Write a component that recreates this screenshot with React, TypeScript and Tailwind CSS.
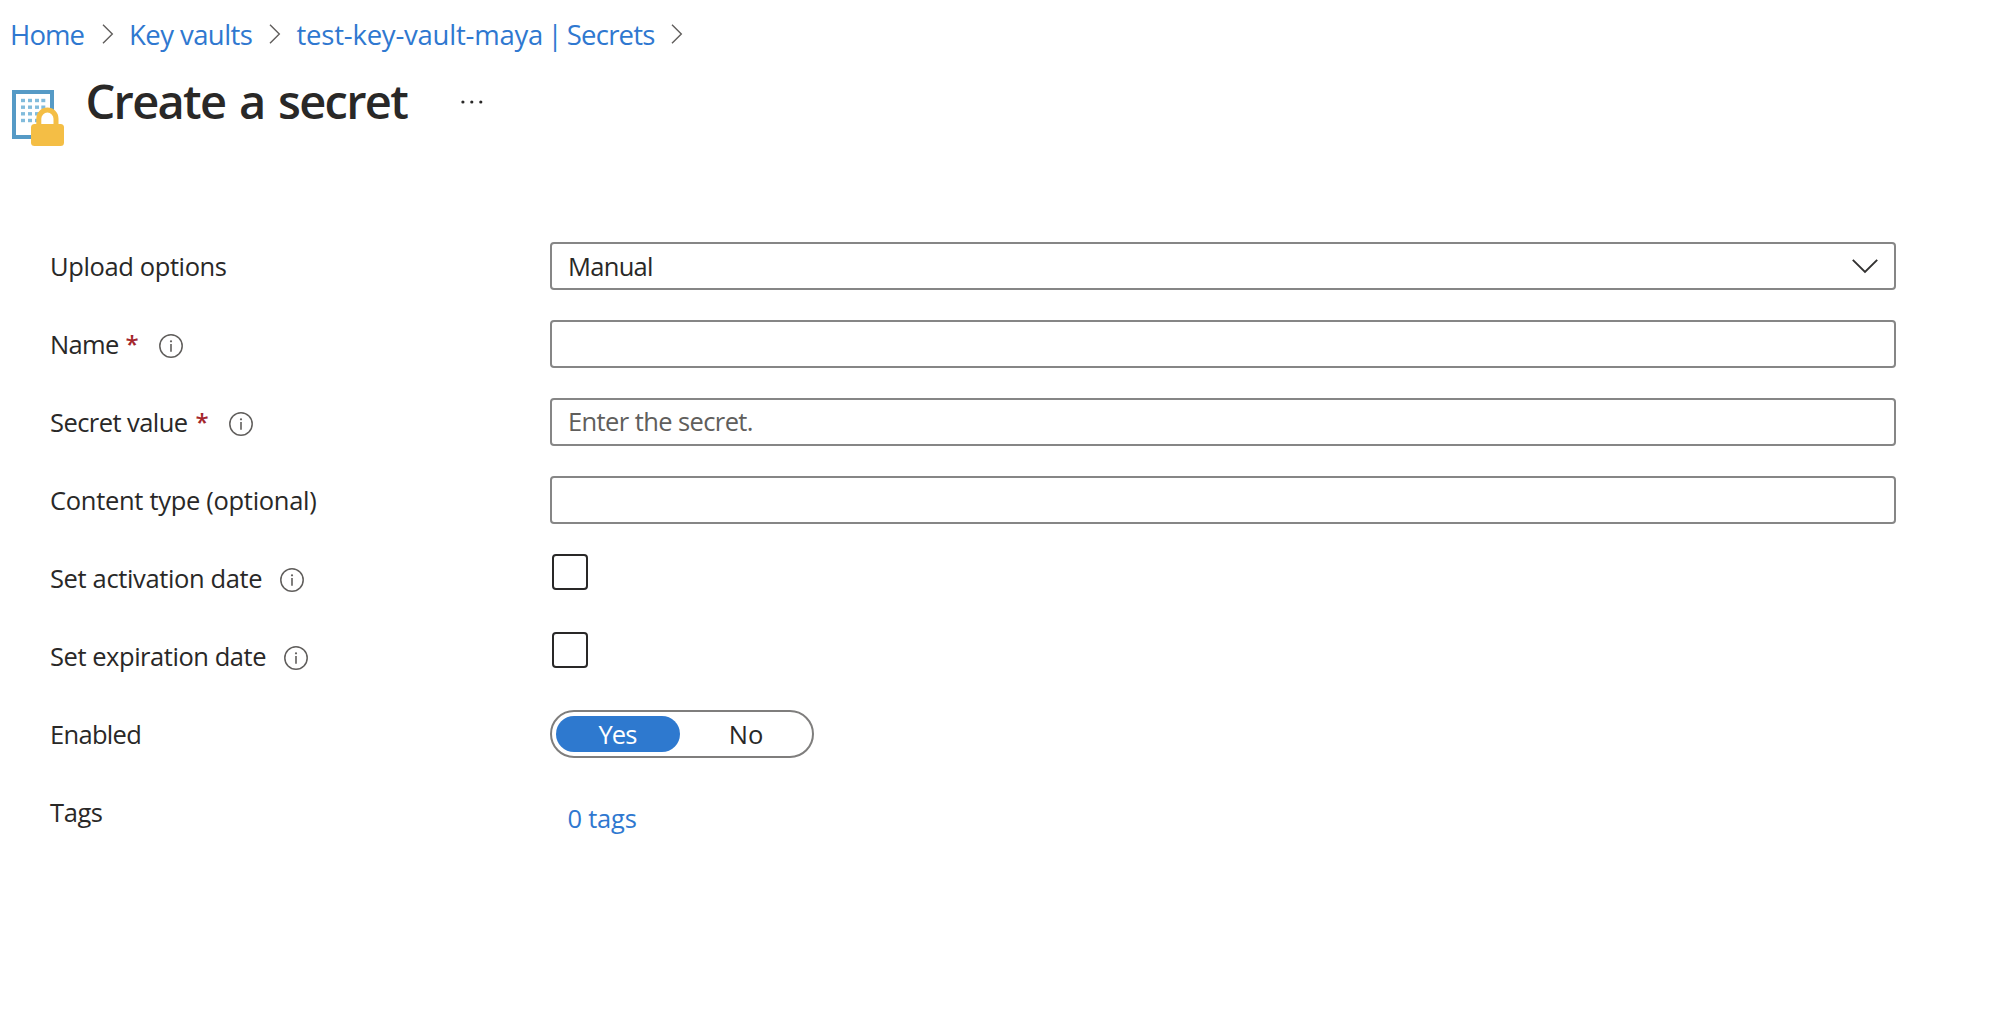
import type { ReactNode } from "react";

function Crumb({ children, className }: { children: ReactNode; className: string }) {
  return (
    <a href="#" className={`block h-full whitespace-nowrap text-[27.5px] text-[#2f78d0] ${className}`}>
      {children}
    </a>
  );
}

function CrumbChevron({ className }: { className: string }) {
  return (
    <svg width="12" height="20" viewBox="0 0 12 20" fill="none" className={className}>
      <path d="M1 0.7 10.3 10 1 19.3" stroke="#605e5c" strokeWidth="1.4" />
    </svg>
  );
}

function InfoIcon({ className }: { className: string }) {
  return (
    <svg width="24" height="24" viewBox="0 0 24 24" fill="none" className={`mt-1 shrink-0 ${className}`}>
      <circle cx="12" cy="12" r="11.2" stroke="#605e5c" strokeWidth="1.5" />
      <path d="M12 10v7.8" stroke="#605e5c" strokeWidth="1.6" />
      <circle cx="12" cy="7.3" r="1.1" fill="#605e5c" />
    </svg>
  );
}

const dotColumns = [21, 28, 35, 41.3];
const dotRows = [18.8, 25.5, 32.1, 38.8];

function SecretIcon() {
  return (
    <svg width="54" height="60" viewBox="11 88 54 60" className="mt-[12px] shrink-0">
      <rect x="14" y="92" width="38" height="45" fill="#fff" stroke="#559ac6" strokeWidth="4" />
      {dotRows.map((y) =>
        dotColumns.map((x) => (
          <rect key={`${x}-${y}`} x={x} y={y + 80} width="4" height="3.4" fill="#82bcdc" />
        )),
      )}
      <path
        d="M38.8 125v-6.3a8.6 8.6 0 0 1 17.2 0v6.3"
        fill="#fff"
        stroke="#f4be45"
        strokeWidth="5"
      />
      <rect x="31" y="124" width="33" height="22" rx="3.5" fill="#f4be45" />
    </svg>
  );
}

function Row({
  label,
  tracking,
  required,
  info,
  children,
}: {
  label: string;
  tracking: string;
  required?: string;
  info?: string;
  children: ReactNode;
}) {
  return (
    <div className="flex h-12">
      <div className="flex w-[500px] shrink-0 items-center whitespace-nowrap leading-[48px]">
        <span className={tracking}>{label}</span>
        {required && (
          <span className={`w-[14px] text-[24px] font-semibold text-[#a4262c] ${required}`}>*</span>
        )}
        {info && <InfoIcon className={info} />}
      </div>
      {children}
    </div>
  );
}

const field =
  "h-12 w-[1346px] rounded-[4px] border-2 border-[#868686] bg-white pl-[16px] outline-none";

export default function App() {
  return (
    <main className="h-[1028px] w-[2006px] overflow-hidden bg-white font-['Open_Sans',sans-serif] text-[25.5px] text-[#292827]">
      <nav className="flex h-[68px] items-center pl-[10px] leading-[69px]">
        <Crumb className="w-[91.5px] tracking-[-0.9px]">Home</Crumb>
        <CrumbChevron className="w-[12px]" />
        <Crumb className="ml-[15.5px] w-[140px] tracking-[-0.56px]">Key vaults</Crumb>
        <CrumbChevron className="w-[12px]" />
        <Crumb className="ml-[15.5px] w-[374px] tracking-[-0.22px] [word-spacing:-2.5px]">
          test-key-vault-maya | <span className="tracking-[-0.8px]">Secrets</span>
        </Crumb>
        <CrumbChevron className="w-[12px]" />
      </nav>

      <header className="flex h-[174px] items-start pl-[11px]">
        <div className="mt-[8px] flex">
          <SecretIcon />
        </div>
        <h1 className="ml-[20.5px] mt-px w-[374.5px] whitespace-nowrap text-[47px] font-semibold leading-[64px] tracking-[-1.7px] [word-spacing:3px]">
          Create a secret
        </h1>
        <svg width="24" height="6" viewBox="0 0 24 6" className="mt-[31px]" fill="#292827">
          <circle cx="2.9" cy="3" r="1.6" />
          <circle cx="11.8" cy="3" r="1.6" />
          <circle cx="20.8" cy="3" r="1.6" />
        </svg>
      </header>

      <form className="flex flex-col gap-[30px] pl-[50px]">
        <Row label="Upload options" tracking="tracking-[-0.38px]">
          <div className={`flex items-center justify-between pr-[16px] ${field}`}>
            <span className="tracking-[-0.7px]">Manual</span>
            <svg width="26" height="16" viewBox="0 0 26 16" fill="none">
              <path d="M0.8 1.8 13 14 25.2 1.8" stroke="#323130" strokeWidth="1.9" />
            </svg>
          </div>
        </Row>
        <Row label="Name" tracking="tracking-[-0.7px]" required="ml-[7px]" info="ml-[19px]">
          <input className={field} aria-label="Name" />
        </Row>
        <Row label="Secret value" tracking="tracking-[-0.56px]" required="ml-[8px]" info="ml-[19px]">
          <input
            className={`${field} pb-[2px] tracking-[-0.6px] placeholder:text-[#605e5c] placeholder:opacity-100`}
            placeholder="Enter the secret."
            aria-label="Secret value"
          />
        </Row>
        <Row label="Content type (optional)" tracking="tracking-[-0.3px]">
          <input className={field} aria-label="Content type" />
        </Row>
        <Row label="Set activation date" tracking="tracking-[-0.36px]" info="ml-[18px]">
          <span role="checkbox" aria-checked="false" className="ml-[2px] size-9 rounded-[4px] border-2 border-[#292827]" />
        </Row>
        <Row label="Set expiration date" tracking="tracking-[-0.45px]" info="ml-[18px]">
          <span role="checkbox" aria-checked="false" className="ml-[2px] size-9 rounded-[4px] border-2 border-[#292827]" />
        </Row>
        <Row label="Enabled" tracking="tracking-[-0.7px]">
          <div className="flex h-12 w-[264px] items-center rounded-full border-2 border-[#7f7e7d] pl-1 leading-9">
            <span className="h-9 w-[124px] rounded-full bg-[#2e79cf] pr-px text-center tracking-[-0.9px] text-white">
              Yes
            </span>
            <span className="w-[132px] text-center">No</span>
          </div>
        </Row>
        <Row label="Tags" tracking="tracking-[-0.4px]">
          <a href="#" className="ml-[17.5px] mt-[6px] leading-[48px] tracking-[-0.23px] text-[#2f78d0]">
            0 tags
          </a>
        </Row>
      </form>
    </main>
  );
}
